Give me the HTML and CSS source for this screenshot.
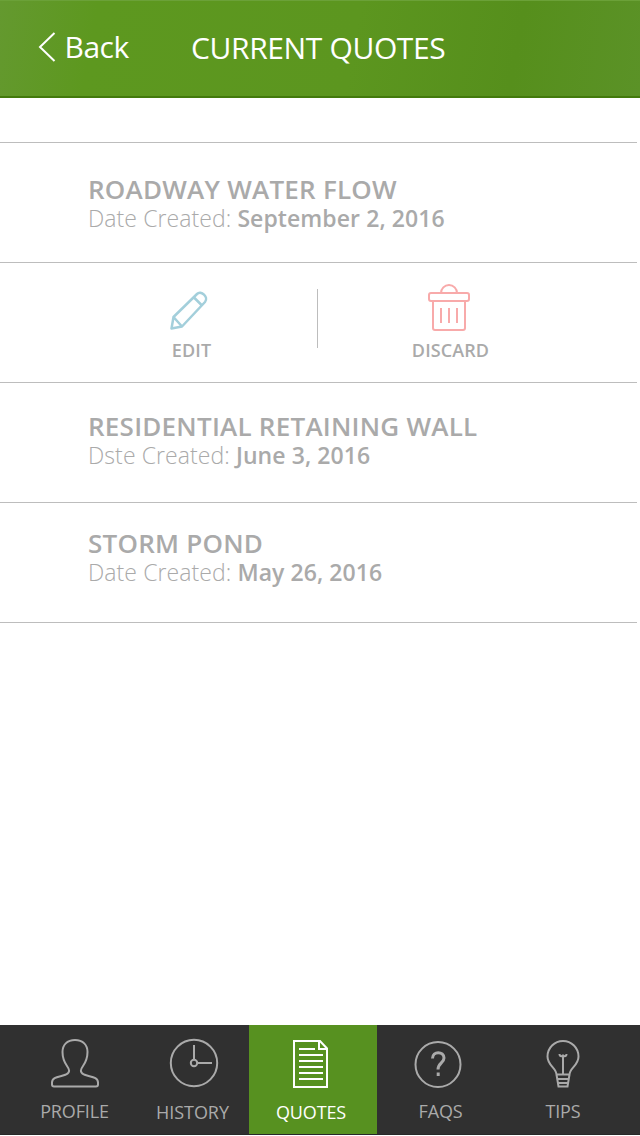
FILE: index.html
```html
<!DOCTYPE html>
<html lang="en">
<head>
<meta charset="utf-8">
<title>Current Quotes</title>
<link rel="stylesheet" href="styles.css">
</head>
<body>
<div class="app">
  <header class="header">
    <a class="back">
      <svg width="18" height="32" viewBox="0 0 18 32"><path d="M16.500 2 2 16 16.500 30"/></svg>
      <span>Back</span>
    </a>
    <h1 class="title">CURRENT QUOTES</h1>
  </header>

  <main class="list">
    <section class="quote quote-first">
      <h2 class="name name-roadway">ROADWAY WATER FLOW</h2>
      <p class="date"><span class="label">Date Created:</span> <b>September 2, 2016</b></p>
    </section>
    <section class="actions">
      <button class="action edit">
        <svg width="42" height="42" viewBox="0 0 42 42">
          <path d="M3.500 39.500 5.500 28 29 5c4-4 12 3 8 8L14 37.500ZM5.500 28 14 37.500M26 8.500 34 16.500"/>
        </svg>
        <span>EDIT</span>
      </button>
      <div class="divider"></div>
      <button class="action discard">
        <svg width="44" height="50" viewBox="0 0 44 50">
          <rect x="2" y="11" width="40" height="8" rx="2"/>
          <path d="M14 11a8 8 0 0 1 16 0M6 19v27a2 2 0 0 0 2 2h28a2 2 0 0 0 2-2V19M14 26v15M22 26v15M30 26v15"/>
        </svg>
        <span>DISCARD</span>
      </button>
    </section>
    <section class="quote quote-second">
      <h2 class="name name-wall">RESIDENTIAL RETAINING WALL</h2>
      <p class="date"><span class="label">Dste Created:</span> <b>June 3, 2016</b></p>
    </section>
    <section class="quote quote-third">
      <h2 class="name name-pond">STORM POND</h2>
      <p class="date"><span class="label">Date Created:</span> <b>May 26, 2016</b></p>
    </section>
  </main>

  <nav class="tabs">
    <a class="tab profile">
      <svg width="50" height="50" viewBox="0 0 50 50"><path d="M25 2C17 2 12.500 7 12.500 14c0 6 1.700 10 4.500 14 2.500 3.500 3.500 6-1 8.500C11 39 2 38 2 44.500V46.500q0 2 2 2H46q2 0 2-2v-2C48 38 39 39 34 36.500c-4.500-2.500-3.500-5-1-8.500 2.800-4 4.500-8 4.500-14C37.500 7 33 2 25 2Z"/></svg>
      <span>PROFILE</span>
    </a>
    <a class="tab history">
      <svg width="50" height="50" viewBox="0 0 50 50"><circle cx="26" cy="25" r="23.200"/><circle cx="26" cy="25" r="3.200"/><path d="M26 7v15M29 25h15"/></svg>
      <span>HISTORY</span>
    </a>
    <a class="tab quotes active">
      <svg width="38" height="50" viewBox="0 0 38 50"><path d="M2 3h26l7 7.500V49H2ZM27 3v8h8M7 11h16M7 17h24M7 23h24M7 29h24M7 35h24M7 41h24"/></svg>
      <span>QUOTES</span>
    </a>
    <a class="tab faqs">
      <svg width="50" height="50" viewBox="0 0 50 50"><circle cx="25" cy="26.500" r="22.500"/><path class="mark" d="M19.500 20.500c0-8 11.500-7.500 11.500-.5 0 5-6 5-6 11.500M25.200 34.500v3.500"/></svg>
      <span>FAQS</span>
    </a>
    <a class="tab tips">
      <svg width="36" height="50" viewBox="0 0 36 50"><path d="M11.500 36.500C11 29.500 2.500 27.500 2.500 18.500a15.500 15.500 0 0 1 31 0C33.500 27.500 25 29.500 24.500 36.500ZM11.500 36.500l2 12h9l2-12M13 41h10M13.500 45h9M18 36V18M14.500 16c0 3 3.500 2.500 3.500.5 0 2 3.500 2.500 3.500-.5"/></svg>
      <span>TIPS</span>
    </a>
  </nav>
</div>
</body>
</html>
```
FILE: styles.css
```css
* { box-sizing: border-box; }
body { margin: 0; background: #fff; font-family: "Open Sans", sans-serif; }
h1, h2, p { margin: 0; }
svg { display: block; fill: none; stroke: currentColor; stroke-width: 2; flex: none; overflow: visible; }
.app { display: flex; flex-direction: column; height: 1136px; width: 640px; overflow: hidden; }
.header {
  display: flex; height: 98px; flex: none; padding: 26px 0 0 38px; color: #fff;
  border-bottom: 2px solid #437a0c; border-top: 1px solid #6ba138;
  background: linear-gradient(100deg, #64992f 0%, #5d981f 15%, #5c961f 55%, #568f1c 80%, #5b9227 100%);
}
.back { display: flex; width: 153px; font-size: 30px; line-height: 40px; letter-spacing: -.5px; }
.back svg { margin: 4px 8.5px 0 0; }
.title { font-size: 30px; font-weight: 400; line-height: 42px; white-space: nowrap; letter-spacing: -.37px; }
.list { margin-top: 44px; width: 637px; border-bottom: 1px solid #bdbdbd; }
.quote, .actions { height: 120px; border-top: 1px solid #bdbdbd; }
.quote { padding-left: 88px; color: #aaa; white-space: nowrap; }
.quote-first { padding-top: 31px; }
.quote-second { padding-top: 28px; }
.quote-third { padding-top: 25px; }
.name { font-size: 26px; line-height: 30px; font-weight: 600; letter-spacing: .24px; }
.date { font-size: 23px; line-height: 28px; letter-spacing: .08px; }
.label { font-weight: 300; }
.date b { font-weight: 600; }
.actions { display: flex; }
.action {
  display: flex; flex-direction: column; align-items: center; justify-content: space-between;
  border: 0; background: none; margin: 0; font: 600 18px/24px "Open Sans", sans-serif; padding: 0 0 20px;
}
.action span { color: #aaa; letter-spacing: .1px; }
.edit { width: 317px; padding: 26px 0 20px 66px; color: #a3cfdb; }
.edit svg { margin-left: -6px; stroke-width: 2.5; stroke-linejoin: round; }
.divider { width: 1px; height: 59px; margin-top: 26px; background: #bdbdbd; }
.discard { width: 265px; padding-top: 19px; color: #f8aaaa; }
.discard svg { margin-left: -3px; }
.tabs { display: flex; height: 110px; margin-top: auto; margin-bottom: 1px; background: #303030; border-bottom: 1px solid #282828; }
.tab { display: flex; flex-direction: column; align-items: center; color: #aaa; font-size: 18px; line-height: 24px; height: 109px; padding-top: 13px; letter-spacing: -.15px; }
.tab svg { height: 50px; }
.tab span { margin-top: 11px; }
.tab.history span, .tab.quotes span { margin-top: 12px; }
.profile { width: 136px; padding-left: 13px; }
.history { width: 113px; letter-spacing: -.05px; }
.quotes { width: 128px; padding-right: 4px; }
.faqs { width: 127px; }
.faqs svg { margin-left: -5px; }
.tips { width: 118px; }
.active { background: #579120; color: #fff; }
.faqs .mark { stroke-width: 3; }
```
